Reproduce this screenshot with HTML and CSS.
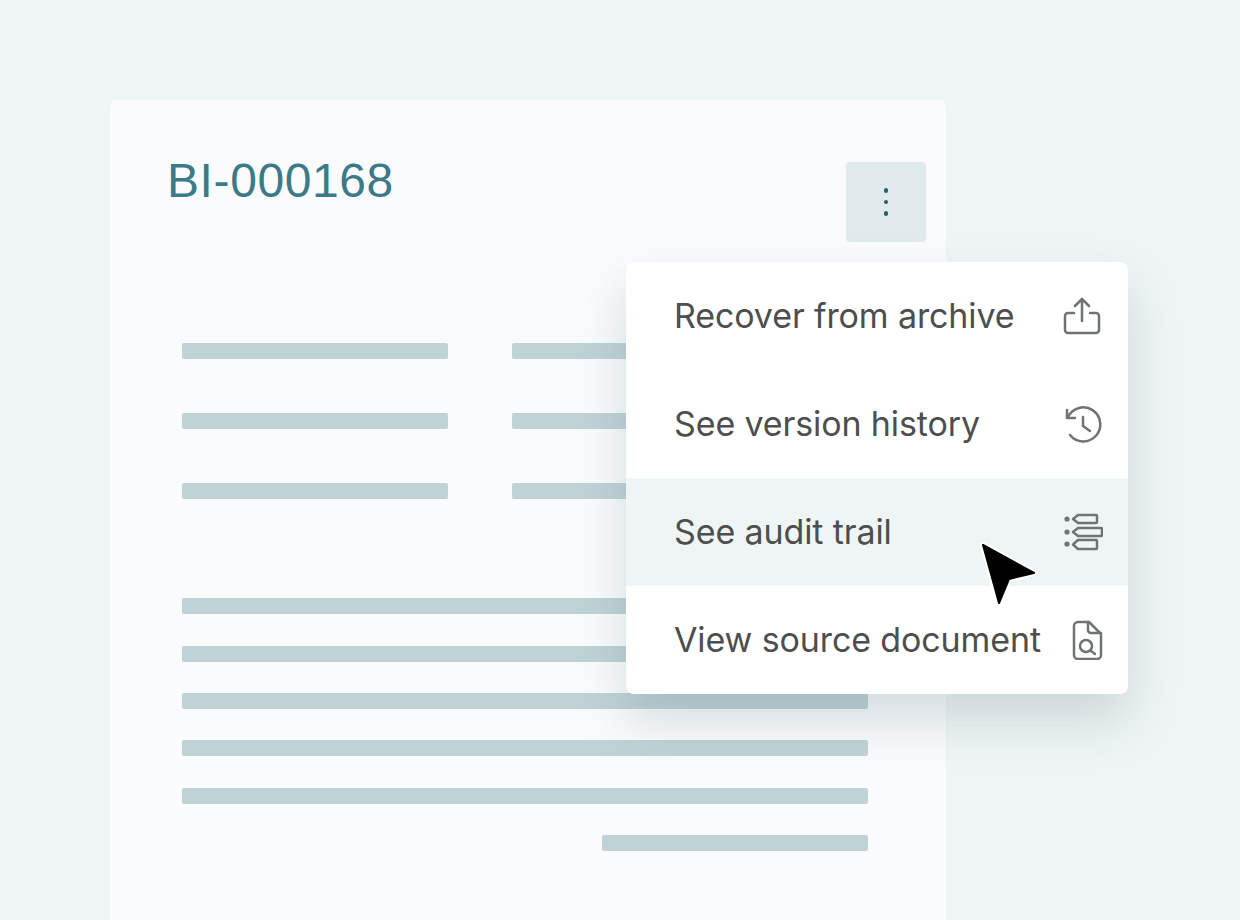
FILE: index.html
```html
<!DOCTYPE html>
<html lang="en">

<head>
    <meta charset="UTF-8">
    <meta name="viewport" content="width=device-width, initial-scale=1.0">
    <title>BI-000168</title>
    <link rel="stylesheet" href="styles.css">
</head>

<body>
    <div class="card">
        <div class="card-header">
            <h1>BI-000168</h1>
            <button class="more-btn" type="button" aria-label="More">
                <span></span><span></span><span></span>
            </button>
        </div>
        <div class="fields">
            <div class="bar"></div>
            <div class="bar"></div>
            <div class="bar"></div>
            <div class="bar"></div>
            <div class="bar"></div>
            <div class="bar"></div>
        </div>
        <div class="lines">
            <div class="bar"></div>
            <div class="bar"></div>
            <div class="bar"></div>
            <div class="bar"></div>
            <div class="bar"></div>
            <div class="bar short"></div>
        </div>
    </div>

    <div class="menu">
        <a class="menu-item">
            <span class="menu-label">Recover from archive</span>
            <svg class="icon" viewBox="0 0 40 40">
                <path d="M11 17H5a3 3 0 0 0-3 3v14a3 3 0 0 0 3 3h28a3 3 0 0 0 3-3V20a3 3 0 0 0-3-3h-6" />
                <path d="M19 25V3M12 10l7-7 7 7" />
            </svg>
        </a>
        <a class="menu-item">
            <span class="menu-label">See version history</span>
            <svg class="icon" viewBox="0 0 40 40">
                <path d="M5 13A17 17 0 1 1 7 31" />
                <path d="M4 6v8h8" />
                <path d="M20 13v9l7 5" />
            </svg>
        </a>
        <a class="menu-item active">
            <span class="menu-label">See audit trail</span>
            <svg class="icon" viewBox="0 0 40 40">
                <path d="M15 3h18a1 1 0 0 1 1 1v6a1 1 0 0 1-1 1H15l-5-4z" />
                <path d="M15 16h23a1 1 0 0 1 1 1v6a1 1 0 0 1-1 1H15l-5-4z" />
                <path d="M15 28h18a1 1 0 0 1 1 1v7a1 1 0 0 1-1 1H15l-5-4.500z" />
                <circle class="dot" cx="4" cy="7" r="2.600" />
                <circle class="dot" cx="4" cy="20" r="2.600" />
                <circle class="dot" cx="4" cy="32" r="2.600" />
            </svg>
        </a>
        <a class="menu-item">
            <span class="menu-label">View source document</span>
            <svg class="icon" viewBox="0 0 40 40">
                <path d="M15 2h11l12 12v21a4 4 0 0 1-4 4H15a4 4 0 0 1-4-4V6a4 4 0 0 1 4-4z" />
                <path d="M25 2v8a3 3 0 0 0 3 3h10" />
                <circle cx="23" cy="26" r="6" />
                <path d="M27.500 30.500l4.500 3.500" />
            </svg>
        </a>
    </div>

    <svg class="cursor" viewBox="0 0 62 68">
        <path class="cursor-edge" d="M5 5L56 33 31 39 21 63z" />
        <path class="cursor-fill" d="M5 5L56 33 31 39 21 63z" />
    </svg>
</body>

</html>
```

FILE: styles.css
```css
html,
body {
    height: 100%;
}

body {
    margin: 0;
    height: 920px;
    overflow: hidden;
    position: relative;
    background-color: #eff5f5;
    font-family: 'Inter', 'Liberation Sans', sans-serif;
    color: #4d4e4e;
}

.card {
    box-sizing: border-box;
    width: 836px;
    height: 860px;
    margin: 100px 0 0 110px;
    padding: 62px 20px 0 57px;
    background-color: #f9fbfd;
    border-radius: 6px;
}

.card-header {
    display: flex;
    justify-content: space-between;
    align-items: flex-start;
}

.card-header h1 {
    margin: 0;
    font-family: 'Liberation Sans', Arial, sans-serif;
    font-size: 48px;
    line-height: 38px;
    font-weight: 400;
    color: #3c7a87;
    letter-spacing: 0.6px;
}

.more-btn {
    display: flex;
    flex-direction: column;
    align-items: center;
    justify-content: center;
    gap: 7px;
    width: 80px;
    height: 80px;
    padding: 0;
    border: none;
    border-radius: 4px;
    background-color: #e0e9ec;
}

.more-btn span {
    width: 4.500px;
    height: 4.500px;
    border-radius: 50%;
    background-color: #1f6170;
}

.bar {
    height: 16px;
    border-radius: 2px;
    background-color: #bfd3d7;
}

.fields {
    display: grid;
    grid-template-columns: 266px 266px;
    column-gap: 64px;
    row-gap: 54px;
    margin: 101px 0 0 15px;
}

.lines {
    display: flex;
    flex-direction: column;
    gap: 31.380px;
    width: 686px;
    margin: 99.300px 0 0 15px;
}

.lines .short {
    width: 266px;
    align-self: flex-end;
}

.menu {
    position: absolute;
    left: 626px;
    top: 262px;
    width: 502px;
    background-color: #fff;
    border-radius: 8px;
    overflow: hidden;
    box-shadow: 0 26px 50px rgba(80, 110, 120, 0.22);
}

.menu-item {
    display: flex;
    align-items: center;
    justify-content: space-between;
    height: 108px;
    padding: 0 25px 0 48px;
    font-size: 34px;
    letter-spacing: -0.12px;
}

.menu-label {
    margin-bottom: 2px;
}

.menu-item.active {
    background-color: #eff5f5;
}

.icon {
    width: 40px;
    height: 40px;
    fill: none;
    stroke: #6f7373;
    stroke-width: 2.500;
    stroke-linecap: round;
    stroke-linejoin: round;
}

.icon .dot {
    fill: #6f7373;
    stroke: none;
}

.cursor {
    position: absolute;
    left: 978px;
    top: 540px;
    width: 62px;
    height: 68px;
}

.cursor path {
    stroke-linejoin: round;
}

.cursor-edge {
    fill: #fff;
    stroke: #fff;
    stroke-width: 6;
}

.cursor-fill {
    fill: #000;
    stroke: #000;
    stroke-width: 2;
}
```
